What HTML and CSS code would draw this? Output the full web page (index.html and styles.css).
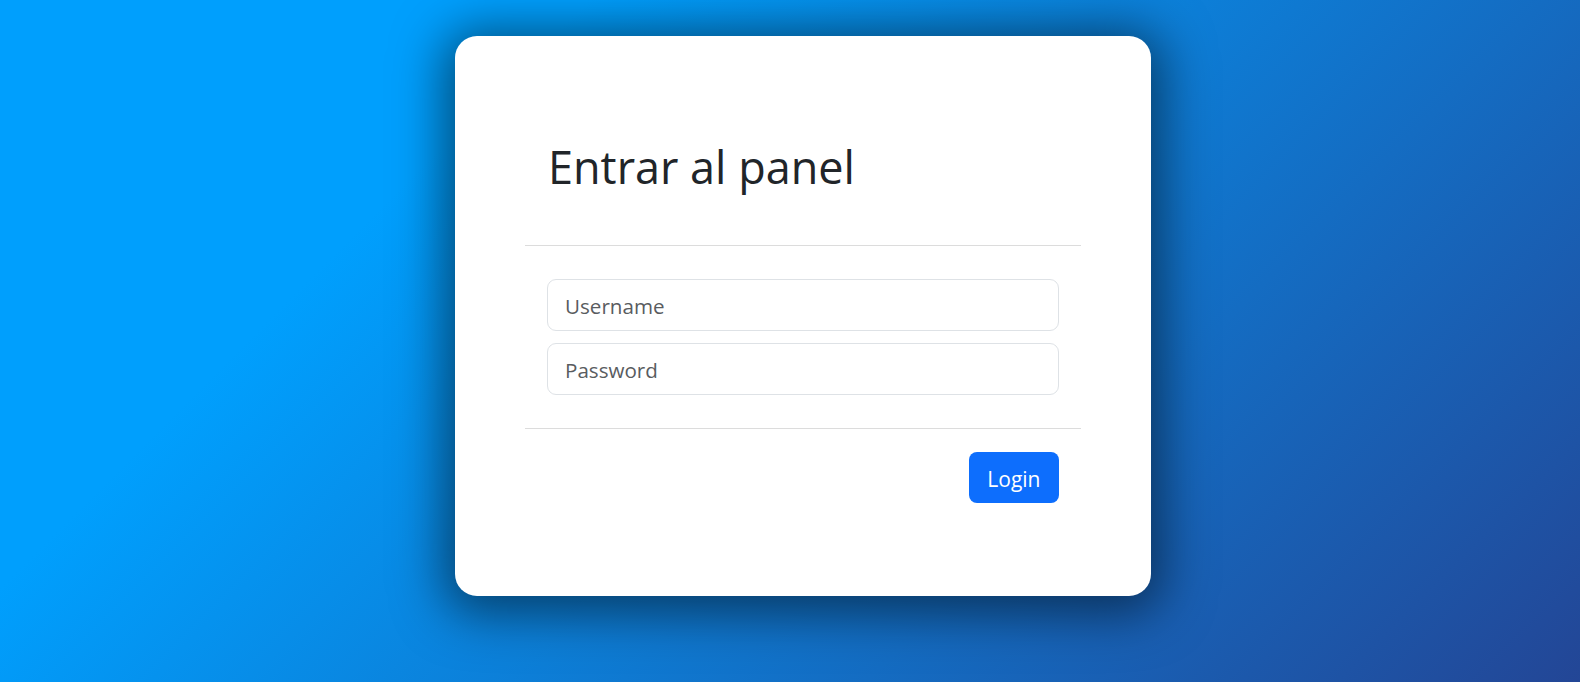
FILE: index.html
```html
<!DOCTYPE html>
<html lang="es">
<head>
<meta charset="utf-8">
<title>Entrar al panel</title>
<link rel="stylesheet" href="styles.css">
</head>
<body>
<main class="page">
  <section class="card">
    <h1 class="title">Entrar al panel</h1>
    <hr class="divider">
    <form class="form">
      <input class="field" type="text" placeholder="Username">
      <input class="field" type="password" placeholder="Password">
    </form>
    <hr class="divider divider-bottom">
    <div class="actions">
      <button class="btn" type="button">Login</button>
    </div>
  </section>
</main>
</body>
</html>
```

FILE: styles.css
```css
html, body {
  margin: 0;
  height: 100%;
}

body {
  background-color: #234696;
  background-image: linear-gradient(315deg, #234696 0%, #009ffd 74%);
  font-family: "Open Sans", "Noto Sans", sans-serif;
  color: #212529;
  overflow: hidden;
}

.page {
  display: flex;
  justify-content: center;
  padding: 36px 0 0 26px;
}

.card {
  box-sizing: border-box;
  width: 696px;
  height: 560px;
  background: #ffffff;
  border-radius: 22px;
  padding: 0 70px;
  box-shadow: 0 6px 50px 12px rgba(0, 0, 0, 0.5);
}

.title {
  margin: 104px 0 0;
  padding-left: 23px;
  font-size: 45px;
  line-height: 54px;
  font-weight: 400;
  color: #212529;
}

.divider {
  margin: 51px 0 0;
  border: 0;
  border-top: 1px solid #dcdcdc;
  height: 0;
}

.divider-bottom {
  margin-top: 33px;
}

.form {
  display: flex;
  flex-direction: column;
  gap: 12px;
  padding: 33px 22px 0;
  margin: 0;
}

.field {
  box-sizing: border-box;
  width: 100%;
  height: 52px;
  border: 1px solid #dee2e6;
  border-radius: 9px;
  padding: 2px 17px 0;
  font-family: "Open Sans", "Noto Sans", sans-serif;
  font-size: 20.6px;
  color: #212529;
  background: #fff;
  outline: none;
}

.field::placeholder {
  color: #595c5f;
}

.actions {
  display: flex;
  justify-content: flex-end;
  padding: 23px 22px 0;
}

.btn {
  box-sizing: border-box;
  height: 51px;
  padding: 3px 18.5px 0;
  border: 0;
  border-radius: 8px;
  background: #0d6efd;
  color: #ffffff;
  font-family: "Open Sans", "Noto Sans", sans-serif;
  font-size: 21px;
  line-height: 1;
}
```
